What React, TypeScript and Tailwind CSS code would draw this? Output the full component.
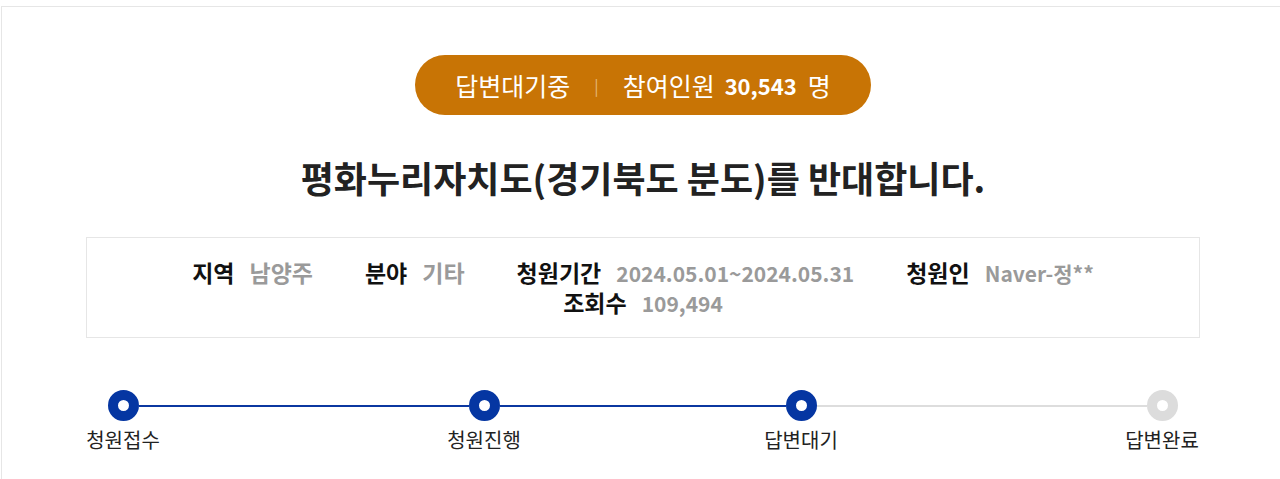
import React from 'react';

const steps = [
  { label: '청원접수', done: true },
  { label: '청원진행', done: true },
  { label: '답변대기', done: true },
  { label: '답변완료', done: false },
];

// widths of the connector cells between step columns
const gaps = ['w-[287px]', 'w-[243px]', 'w-[287px]'];

function Step({ label, done, first, last, leftDone, rightDone }: {
  label: string;
  done: boolean;
  first: boolean;
  last: boolean;
  leftDone: boolean;
  rightDone: boolean;
}) {
  return (
    <div className="w-[74px] flex flex-col items-center">
      <div className="w-full flex items-center">
        <div className={`flex-1 h-[2px] ${first ? 'bg-transparent' : leftDone ? 'bg-[#0b37a0]' : 'bg-[#dddddd]'}`} />
        <div
          className={`w-[31px] h-[31px] rounded-full border-[10px] bg-white shrink-0 ${
            done ? 'border-[#0536a2]' : 'border-[#dcdcdc]'
          }`}
        />
        <div className={`flex-1 h-[2px] ${last ? 'bg-transparent' : rightDone ? 'bg-[#0b37a0]' : 'bg-[#dddddd]'}`} />
      </div>
      <span className="mt-[6px] text-[20px] leading-[26px] text-[#222] whitespace-nowrap">{label}</span>
    </div>
  );
}

function Info({ label, value, latin }: { label: string; value: string; latin?: boolean }) {
  return (
    <div className="mx-[26px] flex items-baseline gap-[15px]">
      <span className="font-bold text-[#111] text-[23px]">{label}</span>
      <span className={`font-semibold text-[#9a9a9a] ${latin ? 'text-[21px]' : 'text-[23px]'}`}>{value}</span>
    </div>
  );
}

export default function App() {
  const font = { fontFamily: '"Noto Sans CJK KR", "Open Sans", sans-serif' };

  return (
    <div className="min-h-[479px] bg-white pt-[6px] overflow-hidden" style={font}>
      <div className="ml-[1px] w-[1300px] border-t border-l border-[#e6e6e6] h-[480px]">
        <div className="w-[1114px] ml-[84px] flex flex-col items-center">
          {/* Status pill */}
          <div className="mt-[48px] h-[60px] w-[456px] rounded-full bg-[#c87405] flex items-center justify-center text-white leading-none">
            <span className="text-[25px]">답변대기중</span>
            <span className="mx-[24px] text-[16px] text-[#e6b77e]">|</span>
            <span className="text-[25px]">참여인원</span>
            <span className="ml-[10px] text-[22px] font-bold">30,543</span>
            <span className="ml-[11px] text-[25px]">명</span>
          </div>

          {/* Title */}
          <h1 className="mt-[40px] text-[36px] leading-[44px] font-bold text-[#222]">
            평화누리자치도(경기북도 분도)를 반대합니다.
          </h1>

          {/* Info box */}
          <div className="mt-[38px] w-full h-[101px] border border-[#e6e6e6] flex items-center justify-center">
            <div className="w-[1000px] flex flex-wrap justify-center leading-[29px]">
              <Info label="지역" value="남양주" />
              <Info label="분야" value="기타" />
              <Info label="청원기간" value="2024.05.01~2024.05.31" latin />
              <Info label="청원인" value="Naver-정**" latin />
              <Info label="조회수" value="109,494" latin />
            </div>
          </div>

          {/* Progress */}
          <div className="mt-[52px] w-full flex items-start">
            {steps.map((s, i) => (
              <React.Fragment key={s.label}>
                <Step
                  label={s.label}
                  done={s.done}
                  first={i === 0}
                  last={i === steps.length - 1}
                  leftDone={i > 0 && steps[i].done}
                  rightDone={i < steps.length - 1 && steps[i + 1].done}
                />
                {i < gaps.length && (
                  <div className={`${gaps[i]} h-[31px] flex items-center`}>
                    <div className={`w-full h-[2px] ${steps[i + 1].done ? 'bg-[#0b37a0]' : 'bg-[#dddddd]'}`} />
                  </div>
                )}
              </React.Fragment>
            ))}
          </div>
        </div>
      </div>
    </div>
  );
}
